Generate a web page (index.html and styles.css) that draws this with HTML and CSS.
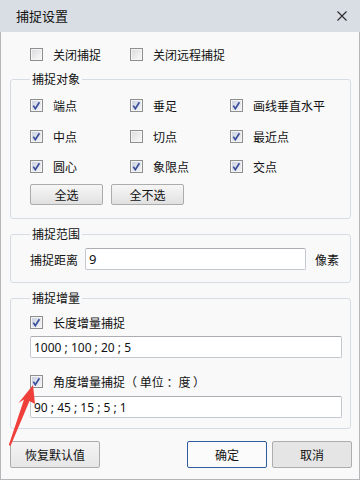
FILE: index.html
```html
<!DOCTYPE html>
<html lang="zh">
<head>
<meta charset="utf-8">
<title>捕捉设置</title>
<link rel="stylesheet" href="styles.css">
</head>
<body>
<div class="win">
  <div class="titlebar">
    <span class="title">捕捉设置</span>
    <svg class="close" width="10" height="10" viewBox="0 0 10 10"><path d="M0.5 0.5 L9.5 9.5 M9.5 0.5 L0.5 9.5" stroke="#2b2b2b" stroke-width="1.1" fill="none"/></svg>
  </div>
  <div class="content">
    <div class="toprow">
      <label class="chk"><span class="cb"></span>关闭捕捉</label>
      <label class="chk"><span class="cb"></span>关闭远程捕捉</label>
    </div>

    <fieldset class="group g1">
      <legend>捕捉对象</legend>
      <div class="grid">
        <label class="chk"><span class="cb on"><svg viewBox="0 0 11 11"><path d="M2.3 5.6 L4.3 8.6 L8.4 2.2" /></svg></span>端点</label>
        <label class="chk"><span class="cb on"><svg viewBox="0 0 11 11"><path d="M2.3 5.6 L4.3 8.6 L8.4 2.2" /></svg></span>垂足</label>
        <label class="chk"><span class="cb on"><svg viewBox="0 0 11 11"><path d="M2.3 5.6 L4.3 8.6 L8.4 2.2" /></svg></span>画线垂直水平</label>
        <label class="chk"><span class="cb on"><svg viewBox="0 0 11 11"><path d="M2.3 5.6 L4.3 8.6 L8.4 2.2" /></svg></span>中点</label>
        <label class="chk"><span class="cb"></span>切点</label>
        <label class="chk"><span class="cb on"><svg viewBox="0 0 11 11"><path d="M2.3 5.6 L4.3 8.6 L8.4 2.2" /></svg></span>最近点</label>
        <label class="chk"><span class="cb on"><svg viewBox="0 0 11 11"><path d="M2.3 5.6 L4.3 8.6 L8.4 2.2" /></svg></span>圆心</label>
        <label class="chk"><span class="cb on"><svg viewBox="0 0 11 11"><path d="M2.3 5.6 L4.3 8.6 L8.4 2.2" /></svg></span>象限点</label>
        <label class="chk"><span class="cb on"><svg viewBox="0 0 11 11"><path d="M2.3 5.6 L4.3 8.6 L8.4 2.2" /></svg></span>交点</label>
      </div>
      <div class="btnrow">
        <button class="btn small">全选</button>
        <button class="btn small">全不选</button>
      </div>
    </fieldset>

    <fieldset class="group g2">
      <legend>捕捉范围</legend>
      <div class="rangerow">
        <span class="lbl">捕捉距离</span>
        <input class="field dist" type="text" value="9">
        <span class="unit">像素</span>
      </div>
    </fieldset>

    <fieldset class="group g3">
      <legend>捕捉增量</legend>
      <label class="chk"><span class="cb on"><svg viewBox="0 0 11 11"><path d="M2.3 5.6 L4.3 8.6 L8.4 2.2" /></svg></span>长度增量捕捉</label>
      <input class="field wide f1" type="text" value="1000 ; 100 ; 20 ; 5">
      <label class="chk c2"><span class="cb on"><svg viewBox="0 0 11 11"><path d="M2.3 5.6 L4.3 8.6 L8.4 2.2" /></svg></span>角度增量捕捉（ 单位 ：度 ）</label>
      <input class="field wide f2" type="text" value="90 ; 45 ; 15 ; 5 ; 1">
    </fieldset>

    <div class="footer">
      <button class="btn reset">恢复默认值</button>
      <div class="right">
        <button class="btn ok">确定</button>
        <button class="btn cancel">取消</button>
      </div>
    </div>
  </div>
  <svg class="arrow" width="361" height="481" viewBox="0 0 361 481"><polygon points="33,385 35,404 29.5,401 10.5,446 8.8,445 24,399.5 18.5,403" fill="#ef3f3a"/></svg>
</div>
</body>
</html>
```

FILE: styles.css
```css
* { box-sizing: border-box; }
html, body { margin: 0; padding: 0; background: #ffffff; }
body {
  font-family: "Noto Sans", "Noto Sans CJK SC", sans-serif;
  font-size: 12px;
  color: #111;
}
.win {
  position: relative;
  width: 360px;
  height: 480px;
  border: 1px solid #b4b6ba;
  border-top: 0;
  background: #f9f9f9;
  display: flex;
  flex-direction: column;
}
.titlebar {
  height: 32px;
  background: #d9dde4;
  display: flex;
  align-items: center;
  justify-content: space-between;
  padding: 0 13px 0 16px;
  margin: 0 -1px;
}
.title {
  font-size: 13px;
  line-height: 16px;
  color: #111;
  font-family: "Noto Sans CJK SC", sans-serif;
}
.close { display: block; margin-top: -1px; }
.content {
  padding: 12px 8px 0 9px;
  display: flex;
  flex-direction: column;
}
.chk {
  display: flex;
  align-items: center;
  height: 21px;
  line-height: 21px;
  white-space: nowrap;
  font-family: "Noto Sans CJK SC", sans-serif;
}
.cb {
  width: 13px;
  height: 13px;
  margin-right: 10px;
  border: 1px solid #8e8f8f;
  background: linear-gradient(135deg, #d9dadc 0%, #eeeeef 60%, #fbfbfb 100%);
  box-shadow: inset 0 0 0 1px #f4f4f4;
  flex: none;
  display: flex;
}
.cb.on {
  background: linear-gradient(135deg, #c9cede 0%, #e4e7ee 60%, #f4f5f8 100%);
}
.cb svg { width: 11px; height: 11px; display: block; }
.cb svg path { fill: none; stroke: #3a4f9b; stroke-width: 1.7; stroke-linejoin: miter; }
.toprow {
  display: flex;
  padding-left: 20px;
  gap: 0;
}
.toprow .chk { width: 100px; }
.group {
  margin: 6px 0 0 0;
  border: 1px solid #d5dce5;
  border-radius: 3px;
  min-width: 0;
}
.group legend {
  padding: 0 2px;
  margin-left: 0;
  line-height: 16px;
  height: 16px;
  font-family: "Noto Sans CJK SC", sans-serif;
}
.g1 { padding: 8px 8px 13px 19px; }
.grid {
  display: grid;
  grid-template-columns: 100px 100px 100px;
  row-gap: 9.5px;
}
.btnrow { display: flex; gap: 8px; margin-top: 7px; }
.btn {
  font-family: "Noto Sans CJK SC", sans-serif;
  font-size: 12px;
  color: #111;
  border: 1px solid #acacac;
  border-radius: 2px;
  background: linear-gradient(#f2f2f2 0%, #ebebeb 50%, #dddddd 51%, #cfcfcf 100%);
  padding: 0;
  line-height: 1;
}
.btn.small { width: 73px; height: 21px; background: linear-gradient(#f6f6f6 0%, #ececec 50%, #e0e0e0 100%); }
.g2 { margin-top: 7px; padding: 6px 8px 12px 19px; }
.rangerow { display: flex; align-items: center; }
.lbl { width: 55px; font-family: "Noto Sans CJK SC", sans-serif; }
.field {
  height: 22px;
  border: 1px solid #c4c8cf;
  border-top-color: #abadb3;
  border-radius: 2px;
  background: #ffffff;
  font-family: "Noto Sans", "Noto Sans CJK SC", sans-serif;
  font-size: 12px;
  color: #111;
  padding: 0 0 0 3px;
  outline: none;
}
.dist { width: 221px; font-size: 13px; }
.unit { margin-left: 9px; font-family: "Noto Sans CJK SC", sans-serif; }
.g3 { margin-top: 7px; padding: 6px 8px 10px 19px; display: flex; flex-direction: column; }
.wide { width: 312px; }
.f1 { margin-top: 3px; }
.c2 { margin-top: 13px; }
.f2 { margin-top: 4px; }
.footer {
  display: flex;
  justify-content: space-between;
  margin-top: 12px;
  padding-right: 0;
}
.footer .btn { height: 27px; }
.reset { width: 90px; background: linear-gradient(#f4f4f4, #e6e6e6); }
.right { display: flex; gap: 5px; margin-right: -1px; }
.ok { width: 80px; border-color: #2f5d9f; background: #fbfbfb; }
.cancel { width: 80px; background: #e5e5e5; border-color: #adadad; }
.arrow { position: absolute; left: -1px; top: 0; pointer-events: none; }
```
